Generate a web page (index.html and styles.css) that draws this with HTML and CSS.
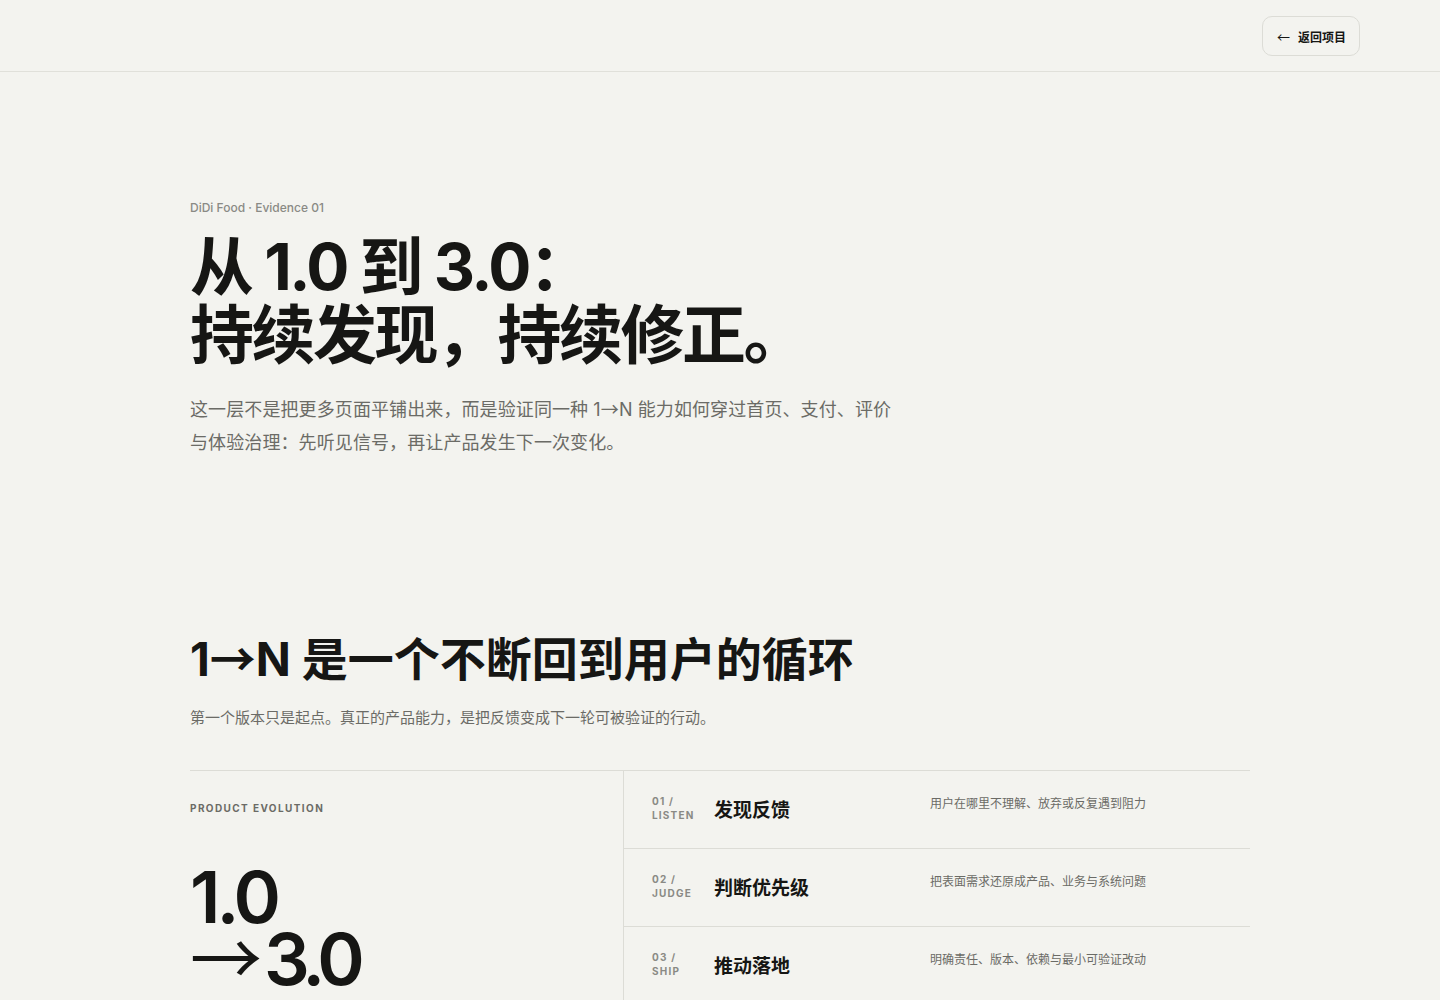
FILE: index.html
```html
<!DOCTYPE html>
<html lang="zh-CN">
<head>
<meta charset="utf-8">
<title>DiDi Food · Evidence 01</title>
<link rel="stylesheet" href="styles.css">
</head>
<body>
<header class="topbar">
  <a class="back-btn" href="#"><span class="arrow">←</span><span>返回项目</span></a>
</header>
<main class="page">
  <section class="hero">
    <p class="eyebrow">DiDi Food · Evidence 01</p>
    <h1 class="hero-title">从 1.0 到 3.0：<br>持续发现，持续修正。</h1>
    <p class="hero-lead">这一层不是把更多页面平铺出来，而是验证同一种 1<span class="ar">→</span>N 能力如何穿过首页、支付、评价与体验治理：先听见信号，再让产品发生下一次变化。</p>
  </section>
  <section class="loop">
    <h2 class="loop-title">1<span class="ar">→</span>N 是一个不断回到用户的循环</h2>
    <p class="loop-sub">第一个版本只是起点。真正的产品能力，是把反馈变成下一轮可被验证的行动。</p>
    <div class="grid">
      <div class="evo">
        <p class="evo-label">PRODUCT EVOLUTION</p>
        <p class="evo-big">1.0<br><span class="ar big-ar">→</span><span class="three">3.0</span></p>
      </div>
      <div class="steps">
        <div class="step">
          <div class="step-num">01 /<br>LISTEN</div>
          <div class="step-title">发现反馈</div>
          <div class="step-desc">用户在哪里不理解、放弃或反复遇到阻力</div>
        </div>
        <div class="step">
          <div class="step-num">02 /<br>JUDGE</div>
          <div class="step-title">判断优先级</div>
          <div class="step-desc">把表面需求还原成产品、业务与系统问题</div>
        </div>
        <div class="step">
          <div class="step-num">03 /<br>SHIP</div>
          <div class="step-title">推动落地</div>
          <div class="step-desc">明确责任、版本、依赖与最小可验证改动</div>
        </div>
      </div>
    </div>
  </section>
</main>
</body>
</html>
```
FILE: styles.css
```css
* { box-sizing: border-box; }
html, body { margin: 0; padding: 0; }
body {
  background: #f3f3ef;
  color: #161614;
  font-family: Inter, "Noto Sans CJK SC", sans-serif;
}
p, h1, h2 { margin: 0; }
.ar { font-family: "Noto Sans CJK SC", sans-serif; line-height: 0; }
.topbar {
  height: 72px;
  border-bottom: 1px solid #e0e0da;
  display: flex;
  justify-content: flex-end;
  align-items: flex-start;
  padding: 16px 80px 0 0;
}
.back-btn {
  display: flex;
  align-items: center;
  gap: 8px;
  height: 40px;
  padding: 0 13px 0 14px;
  white-space: nowrap;
  border: 1px solid #dcdcd6;
  border-radius: 10px;
  text-decoration: none;
  color: #161614;
  font-size: 12px;
  font-weight: 700;
  background: #f3f3ef;
}
.back-btn .arrow { font-size: 13px; font-weight: 400; font-family: "Noto Sans CJK SC", sans-serif; }
.page { padding: 0 190px; }
.hero { padding-top: 127px; }
.eyebrow {
  font-size: 12px;
  color: #8a8a85;
  font-weight: 500;
  line-height: 16px;
  padding-top: 1px;
}
.hero-title {
  margin-top: 17px;
  font-size: 64px;
  line-height: 68px;
  font-weight: 700;
  letter-spacing: -2.5px;
}
.hero-lead {
  margin-top: 24px;
  width: 712px;
  font-size: 18px;
  line-height: 33px;
  color: #6b6b66;
  letter-spacing: 0.1px;
}
.loop { padding-top: 172px; }
.loop-title {
  font-size: 46px;
  line-height: 56px;
  font-weight: 700;
  letter-spacing: 0;
}
.loop-sub {
  margin-top: 20px;
  font-size: 15px;
  line-height: 22px;
  color: #6b6b66;
}
.grid {
  margin-top: 41px;
  border-top: 1px solid #dcdcd6;
  display: grid;
  grid-template-columns: 433px 1fr;
}
.evo { padding-top: 30px; }
.evo-label {
  font-size: 10px;
  font-weight: 700;
  letter-spacing: 1.4px;
  color: #6b6b66;
  line-height: 14px;
}
.evo-big {
  margin-top: 51px;
  font-size: 72px;
  line-height: 62px;
  font-weight: 600;
  letter-spacing: -4px;
}
.big-ar { font-weight: 400; letter-spacing: 2px; }
.three { letter-spacing: -6px; }
.steps { border-left: 1px solid #dcdcd6; }
.step {
  height: 78px;
  border-bottom: 1px solid #dcdcd6;
  display: grid;
  grid-template-columns: 62px 216px 1fr;
  padding: 26px 0 0 28px;
  align-items: start;
}
.step-num {
  font-size: 10px;
  line-height: 14px;
  font-weight: 700;
  letter-spacing: 1.2px;
  color: #8a8a85;
  margin-top: -3px;
}
.step-title {
  font-size: 19px;
  line-height: 28px;
  font-weight: 700;
}
.step-desc {
  font-size: 12px;
  line-height: 16px;
  color: #6b6b66;
  margin-top: -1px;
}
```
